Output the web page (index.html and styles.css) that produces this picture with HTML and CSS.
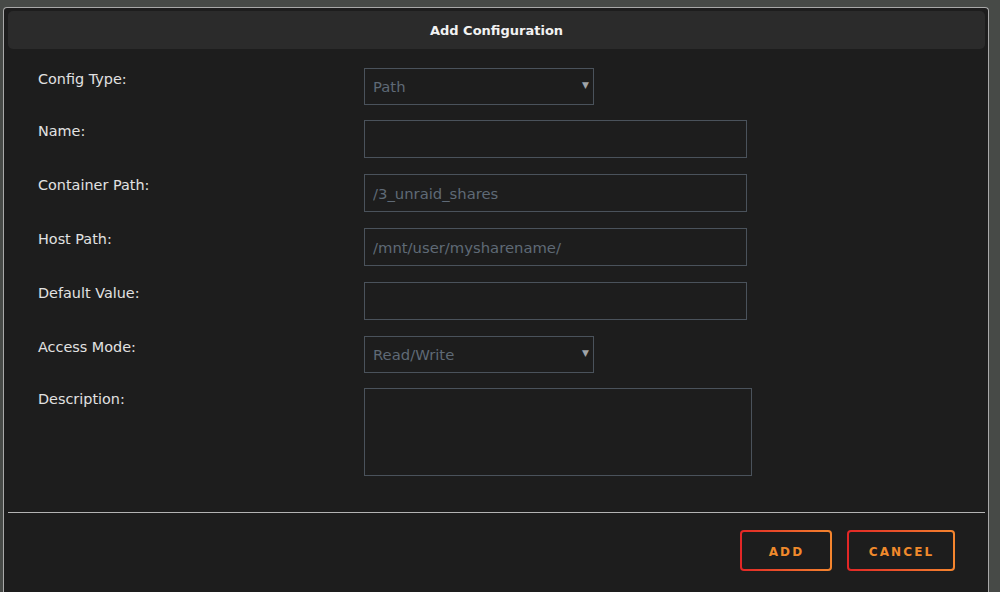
FILE: index.html
```html
<!DOCTYPE html>
<html lang="en">
<head>
    <meta charset="UTF-8">
    <title>Add Configuration</title>
    <link rel="stylesheet" href="styles.css">
</head>
<body>
    <div class="dialog">
        <div class="dialog-title">Add Configuration</div>
        <form class="config-form">
            <label class="field-label">Config Type:</label>
            <div class="select-wrap">
                <select class="field-select">
                    <option>Path</option>
                </select>
            </div>

            <label class="field-label">Name:</label>
            <input class="field-input" type="text">

            <label class="field-label">Container Path:</label>
            <input class="field-input" type="text" placeholder="/3_unraid_shares">

            <label class="field-label">Host Path:</label>
            <input class="field-input" type="text" placeholder="/mnt/user/mysharename/">

            <label class="field-label">Default Value:</label>
            <input class="field-input" type="text">

            <label class="field-label">Access Mode:</label>
            <div class="select-wrap">
                <select class="field-select">
                    <option>Read/Write</option>
                </select>
            </div>

            <label class="field-label">Description:</label>
            <textarea class="field-textarea"></textarea>
        </form>
        <div class="dialog-footer">
            <button class="btn btn-add" type="button">ADD</button>
            <button class="btn btn-cancel" type="button">CANCEL</button>
        </div>
    </div>
</body>
</html>
```

FILE: styles.css
```css
* {
    margin: 0;
    padding: 0;
    box-sizing: border-box;
}

body {
    background-color: #474a47;
    font-family: "DejaVu Sans", "Open Sans", sans-serif;
    color: #e4e4e4;
    overflow: hidden;
    height: 592px;
    padding: 7px 11px 0 3px;
}

.dialog {
    background-color: #1d1d1d;
    border: 1px solid #a9a9a9;
    border-bottom: none;
    border-radius: 4px 4px 0 0;
    padding: 3px 3px 0 4px;
    height: 620px;
}

.dialog-title {
    background-color: #2b2b2b;
    border-radius: 5px;
    height: 38px;
    line-height: 40px;
    text-align: center;
    font-size: 13px;
    font-weight: bold;
    color: #f2f2f2;
}

.config-form {
    display: grid;
    grid-template-columns: 326px 1fr;
    row-gap: 16px;
    padding: 19px 0 0 30px;
}

.field-label {
    font-size: 14.4px;
    line-height: 20px;
    padding-top: 1px;
    color: #e2e2e2;
}

.field-input,
.field-select,
.field-textarea {
    background-color: #1d1d1d;
    border: 1px solid #4a525b;
    color: #5f6a76;
    font-family: inherit;
    font-size: 14.8px;
    padding: 0 8px;
    outline: none;
}

.field-input {
    width: 383px;
    height: 38px;
}

.field-input::placeholder {
    color: #5f6a76;
}

.select-wrap {
    position: relative;
    width: 230px;
    height: 37px;
    margin-bottom: -1px;
}

.select-wrap::after {
    content: "▼";
    position: absolute;
    right: 5px;
    top: 12px;
    font-size: 9px;
    color: #a0a4a8;
    pointer-events: none;
}

.field-select {
    appearance: none;
    width: 100%;
    height: 100%;
}

.field-textarea {
    width: 388px;
    height: 88px;
    resize: none;
}

.dialog-footer {
    margin-top: 36px;
    border-top: 1px solid #b4b4b4;
    display: flex;
    justify-content: flex-end;
    gap: 15px;
    padding: 17px 30px 0 0;
}

.btn {
    height: 41px;
    padding: 2px 0 0 1px;
    border: 2px solid transparent;
    border-radius: 4px;
    background: linear-gradient(#1d1d1d, #1d1d1d) padding-box,
                linear-gradient(90deg, #e22626, #f5862e) border-box;
    color: #f08a2c;
    font-family: inherit;
    font-size: 12px;
    font-weight: bold;
    letter-spacing: 2.1px;
}

.btn-add {
    width: 92px;
}

.btn-cancel {
    width: 108px;
}
```
